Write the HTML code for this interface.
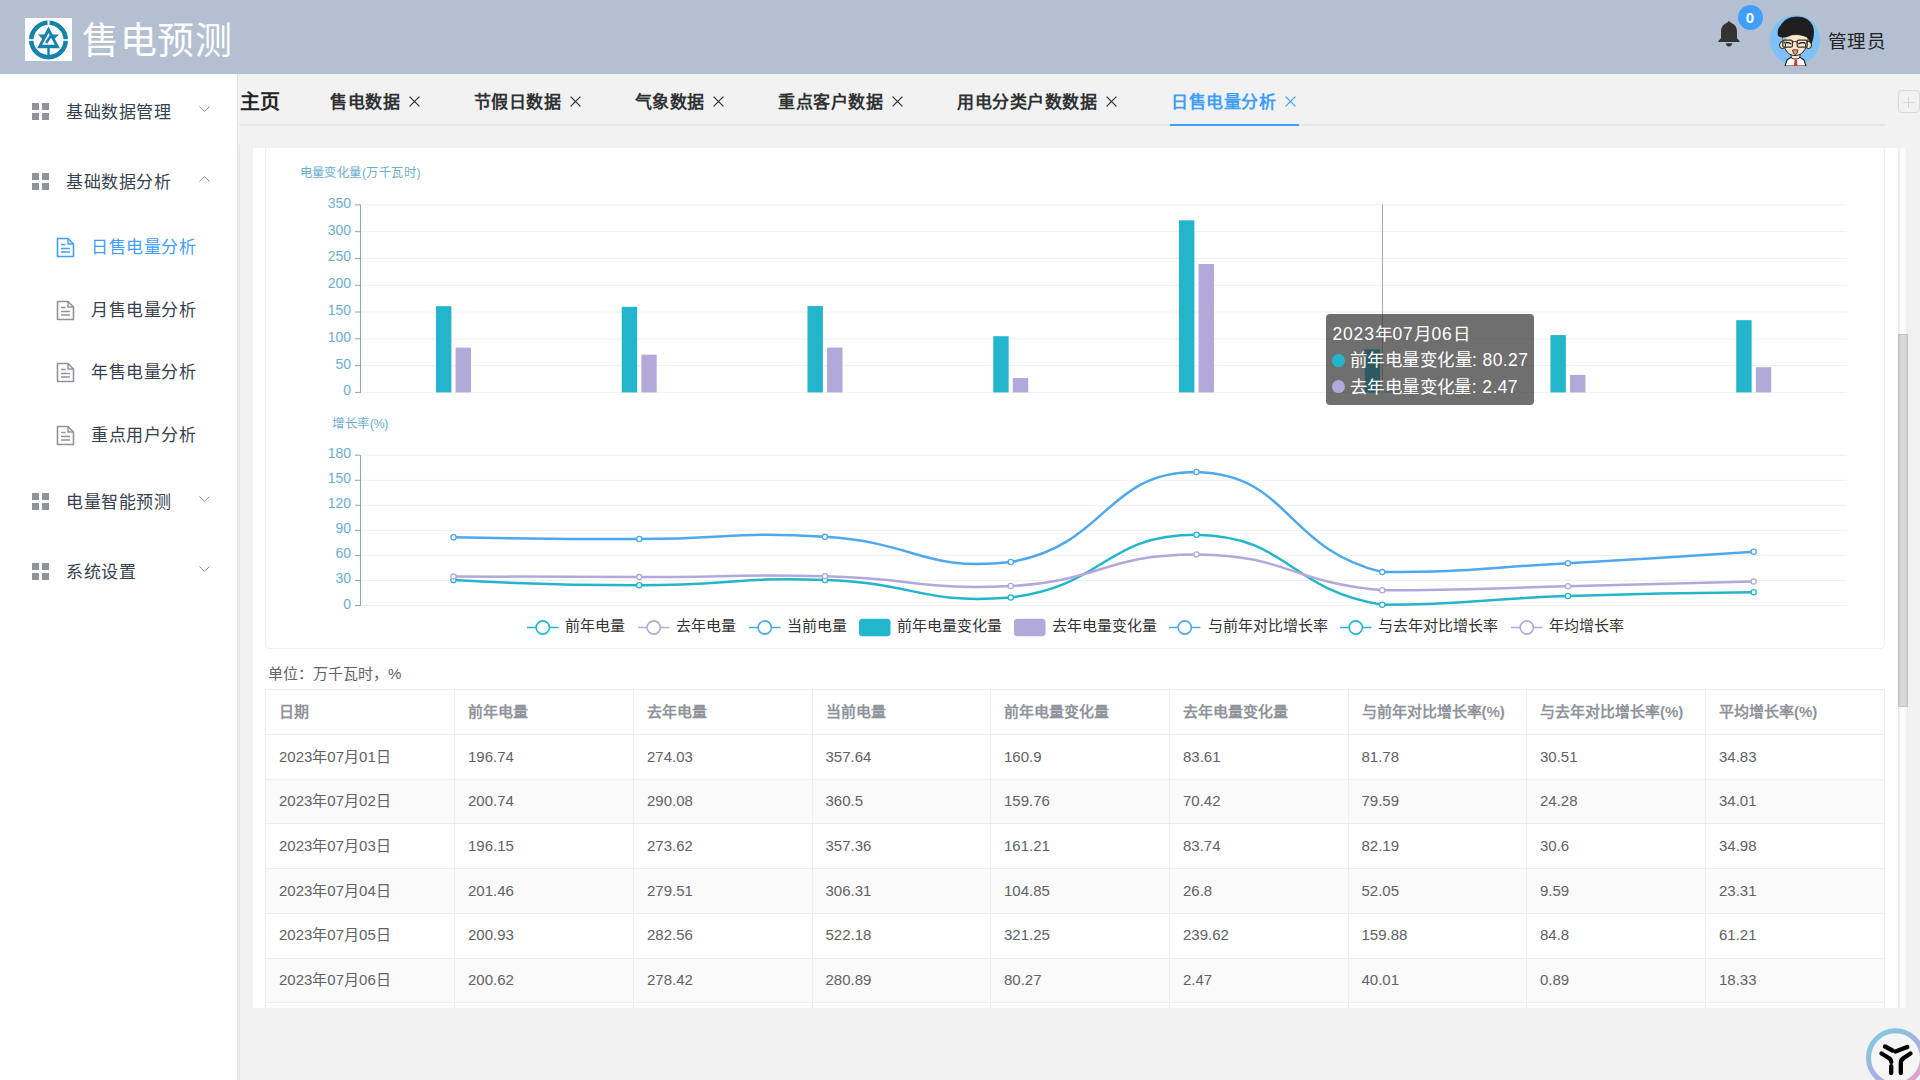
<!DOCTYPE html><html lang="zh-CN"><head><meta charset="utf-8"><title>售电预测</title><style>
*{box-sizing:border-box;margin:0;padding:0}
html,body{width:1920px;height:1080px;overflow:hidden;background:#f2f2f2;font-family:"Liberation Sans",sans-serif;position:relative}
.a{position:absolute;white-space:nowrap}
</style></head><body><div class="a" style="left:0;top:0;width:1920px;height:74px;background:#b3c0d1"></div><div class="a" style="left:25px;top:18px;width:47px;height:43px;background:#fff"></div>
<svg class="a" style="left:25px;top:18px" width="47" height="43" viewBox="0 0 47 43">
<circle cx="23.5" cy="22" r="17.25" fill="none" stroke="#1581ad" stroke-width="4.5"/>
<rect x="22.5" y="0" width="2" height="7" fill="#fff"/>
<rect x="0" y="21.2" width="9" height="1.6" fill="#fff"/>
<rect x="38" y="21.2" width="9" height="1.6" fill="#fff"/>
<path d="M23.5 8.5 L34.8 30.2 L12.2 30.2 Z" fill="#1581ad"/>
<path d="M23.5 15 L29.8 26.8 L17.2 26.8 Z" fill="#fff"/>
<path d="M13 16.5 L20.5 16.5 L18 21.5 Z M34 16.5 L26.5 16.5 L29 21.5 Z" fill="#1581ad"/>
<path d="M26.3 16.8 L21.2 25.2" stroke="#1581ad" stroke-width="2.6"/>
<rect x="22.3" y="29" width="2.4" height="10" fill="#1581ad"/>
</svg><div class="a" style="left:82px;top:15px;font-size:37px;letter-spacing:0.7px;line-height:54px;color:#fff">售电预测</div><svg class="a" style="left:1716px;top:20px" width="26" height="27" viewBox="0 0 26 27">
<path d="M13 1.2c-1 0-1.6.8-1.6 1.6C7.2 3.8 5 7.5 5 11.5v6.8l-2.6 2.8V22h21.2v-.9L21 18.3v-6.8c0-4-2.2-7.7-6.4-8.7 0-.8-.6-1.6-1.6-1.6z" fill="#333"/>
<path d="M9.8 23.2h6.4c0 1.8-1.4 3.2-3.2 3.2s-3.2-1.4-3.2-3.2z" fill="#333"/>
</svg><div class="a" style="left:1737.5px;top:5px;width:25px;height:25px;border-radius:50%;background:#409eff;color:#fff;font-size:15px;font-weight:bold;line-height:25px;text-align:center">0</div><svg class="a" style="left:1770px;top:15px" width="50" height="51" viewBox="0 0 50 51">
<defs><clipPath id="avc"><path d="M25 0A25 25 0 1 1 24.99 0Z M10 38 H40 V51 H10Z"/></clipPath></defs>
<circle cx="25" cy="25" r="25" fill="#7fc0f8"/>
<g clip-path="url(#avc)">
<path d="M15 51 L17 45 Q20 42 24 42 L27 42 Q31 42 34 45 L36 51 Z" fill="#fff" stroke="#1a1a1a" stroke-width="1.1"/>
<path d="M24.5 45 L27 45 L27.5 51 L24 51 Z" fill="#e03030"/>
<rect x="21" y="37" width="9" height="7" rx="3" fill="#fbe6c8" stroke="#1a1a1a" stroke-width="0.9"/>
<path d="M12.5 16 C12 33 17 40.5 25 40.5 C33 40.5 38.5 33 38.5 16 Z" fill="#fbe6c8" stroke="#1a1a1a" stroke-width="1"/>
<ellipse cx="12.5" cy="30" rx="3" ry="3.6" fill="#fbe6c8" stroke="#1a1a1a" stroke-width="1"/>
<ellipse cx="38.5" cy="30" rx="3" ry="3.6" fill="#fbe6c8" stroke="#1a1a1a" stroke-width="1"/>
<path d="M12.6 27 L12.6 21 L16.5 22 L16.5 27 Z" fill="#a8c8c0"/>
<path d="M8.5 21 Q7 14 11 10.5 Q14 4.5 22 2.5 Q31 1 37 4.5 Q43.5 9 43.5 17 Q43.5 24 41 28.5 L38.5 23 Q35 20.5 28 19.5 Q21 19 17.5 21.5 Q13 23 8.5 21 Z" fill="#1f1f1f" stroke="#111" stroke-width="0.8"/>
<rect x="12.8" y="25.2" width="9.6" height="7" rx="1.5" fill="none" stroke="#333" stroke-width="1.3"/>
<rect x="27.2" y="25.2" width="10" height="7" rx="1.5" fill="none" stroke="#333" stroke-width="1.3"/>
<path d="M22.4 27 Q25 26 27.2 27" fill="none" stroke="#333" stroke-width="1"/>
<path d="M15.5 28 Q18 27 21 28.8 M28.5 28.8 Q32 27 35 28" fill="none" stroke="#111" stroke-width="1.4"/>
<path d="M22.5 35 Q25 34.3 28 35 Q27.5 39.5 25.2 39.5 Q23 39.5 22.5 35 Z" fill="#f08a8a" stroke="#1a1a1a" stroke-width="0.7"/>
</g></svg><div class="a" style="left:1827.5px;top:27.5px;font-size:18.5px;letter-spacing:0.8px;line-height:28px;color:#222;font-weight:500">管理员</div><div class="a" style="left:0;top:74px;width:237px;height:1006px;background:#fff"></div><div class="a" style="left:237px;top:74px;width:1px;height:1006px;background:#e4e4e4"></div><div class="a" style="left:239px;top:145px;width:1px;height:935px;background:#e4e4e4"></div><svg class="a" style="left:32px;top:103px" width="17" height="17"><rect x="0" y="0" width="7" height="7" fill="#909399"/><rect x="10" y="0" width="7" height="7" fill="#909399"/><rect x="0" y="10" width="7" height="7" fill="#909399"/><rect x="10" y="10" width="7" height="7" fill="#909399"/></svg><div class="a" style="left:66px;top:99px;letter-spacing:0.6px;font-size:17px;line-height:28px;color:#364150">基础数据管理</div><svg class="a" style="left:199px;top:106px" width="11" height="6"><path d="M0.5 0.5 L5.5 5.5 L10.5 0.5" fill="none" stroke="#909399" stroke-width="1"/></svg><svg class="a" style="left:32px;top:173px" width="17" height="17"><rect x="0" y="0" width="7" height="7" fill="#909399"/><rect x="10" y="0" width="7" height="7" fill="#909399"/><rect x="0" y="10" width="7" height="7" fill="#909399"/><rect x="10" y="10" width="7" height="7" fill="#909399"/></svg><div class="a" style="left:66px;top:169px;letter-spacing:0.6px;font-size:17px;line-height:28px;color:#364150">基础数据分析</div><svg class="a" style="left:199px;top:176px" width="11" height="6"><path d="M0.5 5.5 L5.5 0.5 L10.5 5.5" fill="none" stroke="#909399" stroke-width="1"/></svg><svg class="a" style="left:32px;top:493px" width="17" height="17"><rect x="0" y="0" width="7" height="7" fill="#909399"/><rect x="10" y="0" width="7" height="7" fill="#909399"/><rect x="0" y="10" width="7" height="7" fill="#909399"/><rect x="10" y="10" width="7" height="7" fill="#909399"/></svg><div class="a" style="left:66px;top:489px;letter-spacing:0.6px;font-size:17px;line-height:28px;color:#364150">电量智能预测</div><svg class="a" style="left:199px;top:496px" width="11" height="6"><path d="M0.5 0.5 L5.5 5.5 L10.5 0.5" fill="none" stroke="#909399" stroke-width="1"/></svg><svg class="a" style="left:32px;top:563px" width="17" height="17"><rect x="0" y="0" width="7" height="7" fill="#909399"/><rect x="10" y="0" width="7" height="7" fill="#909399"/><rect x="0" y="10" width="7" height="7" fill="#909399"/><rect x="10" y="10" width="7" height="7" fill="#909399"/></svg><div class="a" style="left:66px;top:559px;letter-spacing:0.6px;font-size:17px;line-height:28px;color:#364150">系统设置</div><svg class="a" style="left:199px;top:566px" width="11" height="6"><path d="M0.5 0.5 L5.5 5.5 L10.5 0.5" fill="none" stroke="#909399" stroke-width="1"/></svg><svg class="a" style="left:56px;top:237px" width="19" height="21" viewBox="0 0 19 21"><path d="M1.5 1.5 H12 L17.5 7 V19.5 H1.5 Z" fill="none" stroke="#409eff" stroke-width="1.6" stroke-linejoin="round"/><path d="M12 1.5 V7 H17.5" fill="none" stroke="#409eff" stroke-width="1.4"/><path d="M5 7.5h4.5M5 11.5h9M5 15h9" stroke="#409eff" stroke-width="1.6"/></svg><div class="a" style="left:91px;top:234px;letter-spacing:0.6px;font-size:17px;line-height:28px;color:#409eff">日售电量分析</div><svg class="a" style="left:56px;top:300px" width="19" height="21" viewBox="0 0 19 21"><path d="M1.5 1.5 H12 L17.5 7 V19.5 H1.5 Z" fill="none" stroke="#909399" stroke-width="1.6" stroke-linejoin="round"/><path d="M12 1.5 V7 H17.5" fill="none" stroke="#909399" stroke-width="1.4"/><path d="M5 7.5h4.5M5 11.5h9M5 15h9" stroke="#909399" stroke-width="1.6"/></svg><div class="a" style="left:91px;top:297px;letter-spacing:0.6px;font-size:17px;line-height:28px;color:#364150">月售电量分析</div><svg class="a" style="left:56px;top:362px" width="19" height="21" viewBox="0 0 19 21"><path d="M1.5 1.5 H12 L17.5 7 V19.5 H1.5 Z" fill="none" stroke="#909399" stroke-width="1.6" stroke-linejoin="round"/><path d="M12 1.5 V7 H17.5" fill="none" stroke="#909399" stroke-width="1.4"/><path d="M5 7.5h4.5M5 11.5h9M5 15h9" stroke="#909399" stroke-width="1.6"/></svg><div class="a" style="left:91px;top:359px;letter-spacing:0.6px;font-size:17px;line-height:28px;color:#364150">年售电量分析</div><svg class="a" style="left:56px;top:425px" width="19" height="21" viewBox="0 0 19 21"><path d="M1.5 1.5 H12 L17.5 7 V19.5 H1.5 Z" fill="none" stroke="#909399" stroke-width="1.6" stroke-linejoin="round"/><path d="M12 1.5 V7 H17.5" fill="none" stroke="#909399" stroke-width="1.4"/><path d="M5 7.5h4.5M5 11.5h9M5 15h9" stroke="#909399" stroke-width="1.6"/></svg><div class="a" style="left:91px;top:422px;letter-spacing:0.6px;font-size:17px;line-height:28px;color:#364150">重点用户分析</div><div class="a" style="left:239px;top:124px;width:1646px;height:2px;background:#e4e7ed"></div><div class="a" style="left:240px;top:87.5px;font-size:20px;line-height:28px;font-weight:bold;color:#222">主页</div><div class="a" style="left:330px;top:88.5px;letter-spacing:0.5px;font-size:17px;line-height:28px;font-weight:bold;color:#303133">售电数据</div><svg class="a" style="left:408.5px;top:96px" width="11" height="11"><path d="M0.6 0.6L10.4 10.4M10.4 0.6L0.6 10.4" stroke="#303133" stroke-width="1.2"/></svg><div class="a" style="left:473.5px;top:88.5px;letter-spacing:0.5px;font-size:17px;line-height:28px;font-weight:bold;color:#303133">节假日数据</div><svg class="a" style="left:569.5px;top:96px" width="11" height="11"><path d="M0.6 0.6L10.4 10.4M10.4 0.6L0.6 10.4" stroke="#303133" stroke-width="1.2"/></svg><div class="a" style="left:634.5px;top:88.5px;letter-spacing:0.5px;font-size:17px;line-height:28px;font-weight:bold;color:#303133">气象数据</div><svg class="a" style="left:713.0px;top:96px" width="11" height="11"><path d="M0.6 0.6L10.4 10.4M10.4 0.6L0.6 10.4" stroke="#303133" stroke-width="1.2"/></svg><div class="a" style="left:778px;top:88.5px;letter-spacing:0.5px;font-size:17px;line-height:28px;font-weight:bold;color:#303133">重点客户数据</div><svg class="a" style="left:891.5px;top:96px" width="11" height="11"><path d="M0.6 0.6L10.4 10.4M10.4 0.6L0.6 10.4" stroke="#303133" stroke-width="1.2"/></svg><div class="a" style="left:957px;top:88.5px;letter-spacing:0.5px;font-size:17px;line-height:28px;font-weight:bold;color:#303133">用电分类户数数据</div><svg class="a" style="left:1105.5px;top:96px" width="11" height="11"><path d="M0.6 0.6L10.4 10.4M10.4 0.6L0.6 10.4" stroke="#303133" stroke-width="1.2"/></svg><div class="a" style="left:1171px;top:88.5px;letter-spacing:0.5px;font-size:17px;line-height:28px;font-weight:bold;color:#409eff">日售电量分析</div><svg class="a" style="left:1284.5px;top:96px" width="11" height="11"><path d="M0.6 0.6L10.4 10.4M10.4 0.6L0.6 10.4" stroke="#409eff" stroke-width="1.2"/></svg><div class="a" style="left:1170px;top:124px;width:129px;height:2px;background:#409eff"></div><div class="a" style="left:1898px;top:90px;width:22px;height:23px;border:1px solid #d3dce6;border-radius:4px"></div><svg class="a" style="left:1903px;top:97px" width="11" height="11"><path d="M5.5 0v11M0 5.5h11" stroke="#ccd5e0" stroke-width="1"/></svg><div class="a" style="left:253px;top:148px;width:1655px;height:860px;background:#fff;overflow:hidden"><div style="position:absolute;left:-253px;top:-148px;width:1920px;height:1080px"><div class="a" style="left:265px;top:60px;width:1620px;height:589px;border:1px solid #ebeef5;border-radius:5px;background:#fff"></div><svg class="a" style="left:0;top:0" width="1920" height="1080" font-family='"Liberation Sans", sans-serif'><text x="299.5" y="177" font-size="12.3" textLength="121" lengthAdjust="spacing" fill="#6baed0">电量变化量(万千瓦时)</text><line x1="361" y1="392.4" x2="1846.6" y2="392.4" stroke="#f0f0f0" stroke-width="1"/><line x1="355" y1="392.4" x2="360" y2="392.4" stroke="#8ca6b8" stroke-width="1"/><text x="351" y="395.4" font-size="14" fill="#6baed0" text-anchor="end">0</text><line x1="361" y1="365.6142857142857" x2="1846.6" y2="365.6142857142857" stroke="#f0f0f0" stroke-width="1"/><line x1="355" y1="365.6142857142857" x2="360" y2="365.6142857142857" stroke="#8ca6b8" stroke-width="1"/><text x="351" y="368.6142857142857" font-size="14" fill="#6baed0" text-anchor="end">50</text><line x1="361" y1="338.8285714285714" x2="1846.6" y2="338.8285714285714" stroke="#f0f0f0" stroke-width="1"/><line x1="355" y1="338.8285714285714" x2="360" y2="338.8285714285714" stroke="#8ca6b8" stroke-width="1"/><text x="351" y="341.8285714285714" font-size="14" fill="#6baed0" text-anchor="end">100</text><line x1="361" y1="312.04285714285714" x2="1846.6" y2="312.04285714285714" stroke="#f0f0f0" stroke-width="1"/><line x1="355" y1="312.04285714285714" x2="360" y2="312.04285714285714" stroke="#8ca6b8" stroke-width="1"/><text x="351" y="315.04285714285714" font-size="14" fill="#6baed0" text-anchor="end">150</text><line x1="361" y1="285.25714285714287" x2="1846.6" y2="285.25714285714287" stroke="#f0f0f0" stroke-width="1"/><line x1="355" y1="285.25714285714287" x2="360" y2="285.25714285714287" stroke="#8ca6b8" stroke-width="1"/><text x="351" y="288.25714285714287" font-size="14" fill="#6baed0" text-anchor="end">200</text><line x1="361" y1="258.4714285714286" x2="1846.6" y2="258.4714285714286" stroke="#f0f0f0" stroke-width="1"/><line x1="355" y1="258.4714285714286" x2="360" y2="258.4714285714286" stroke="#8ca6b8" stroke-width="1"/><text x="351" y="261.4714285714286" font-size="14" fill="#6baed0" text-anchor="end">250</text><line x1="361" y1="231.6857142857143" x2="1846.6" y2="231.6857142857143" stroke="#f0f0f0" stroke-width="1"/><line x1="355" y1="231.6857142857143" x2="360" y2="231.6857142857143" stroke="#8ca6b8" stroke-width="1"/><text x="351" y="234.6857142857143" font-size="14" fill="#6baed0" text-anchor="end">300</text><line x1="361" y1="204.90000000000003" x2="1846.6" y2="204.90000000000003" stroke="#f0f0f0" stroke-width="1"/><line x1="355" y1="204.90000000000003" x2="360" y2="204.90000000000003" stroke="#8ca6b8" stroke-width="1"/><text x="351" y="207.90000000000003" font-size="14" fill="#6baed0" text-anchor="end">350</text><line x1="360.5" y1="204.4" x2="360.5" y2="392.9" stroke="#8ca6b8" stroke-width="1"/><rect x="435.98" y="306.20" width="15.4" height="86.20" fill="#23b5cc"/><rect x="455.58" y="347.61" width="15.4" height="44.79" fill="#b3a8da"/><rect x="621.73" y="306.81" width="15.4" height="85.59" fill="#23b5cc"/><rect x="641.33" y="354.67" width="15.4" height="37.72" fill="#b3a8da"/><rect x="807.48" y="306.04" width="15.4" height="86.36" fill="#23b5cc"/><rect x="827.08" y="347.54" width="15.4" height="44.86" fill="#b3a8da"/><rect x="993.23" y="336.23" width="15.4" height="56.17" fill="#23b5cc"/><rect x="1012.83" y="378.04" width="15.4" height="14.36" fill="#b3a8da"/><rect x="1178.97" y="220.30" width="15.4" height="172.10" fill="#23b5cc"/><rect x="1198.57" y="264.03" width="15.4" height="128.37" fill="#b3a8da"/><rect x="1364.72" y="349.40" width="15.4" height="43.00" fill="#23b5cc"/><rect x="1384.32" y="391.08" width="15.4" height="1.32" fill="#b3a8da"/><rect x="1550.47" y="335.08" width="15.4" height="57.32" fill="#23b5cc"/><rect x="1570.07" y="374.88" width="15.4" height="17.52" fill="#b3a8da"/><rect x="1736.22" y="320.19" width="15.4" height="72.21" fill="#23b5cc"/><rect x="1755.82" y="367.22" width="15.4" height="25.18" fill="#b3a8da"/><line x1="1382.5" y1="204.5" x2="1382.5" y2="392.5" stroke="#aaa" stroke-width="1"/><text x="332" y="428" font-size="12.5" textLength="56.5" lengthAdjust="spacing" fill="#6baed0">增长率(%)</text><line x1="361" y1="605.5" x2="1846.6" y2="605.5" stroke="#f0f0f0" stroke-width="1"/><line x1="355" y1="605.5" x2="360" y2="605.5" stroke="#8ca6b8" stroke-width="1"/><text x="351" y="608.5" font-size="14" fill="#6baed0" text-anchor="end">0</text><line x1="361" y1="580.45" x2="1846.6" y2="580.45" stroke="#f0f0f0" stroke-width="1"/><line x1="355" y1="580.45" x2="360" y2="580.45" stroke="#8ca6b8" stroke-width="1"/><text x="351" y="583.45" font-size="14" fill="#6baed0" text-anchor="end">30</text><line x1="361" y1="555.4" x2="1846.6" y2="555.4" stroke="#f0f0f0" stroke-width="1"/><line x1="355" y1="555.4" x2="360" y2="555.4" stroke="#8ca6b8" stroke-width="1"/><text x="351" y="558.4" font-size="14" fill="#6baed0" text-anchor="end">60</text><line x1="361" y1="530.35" x2="1846.6" y2="530.35" stroke="#f0f0f0" stroke-width="1"/><line x1="355" y1="530.35" x2="360" y2="530.35" stroke="#8ca6b8" stroke-width="1"/><text x="351" y="533.35" font-size="14" fill="#6baed0" text-anchor="end">90</text><line x1="361" y1="505.3" x2="1846.6" y2="505.3" stroke="#f0f0f0" stroke-width="1"/><line x1="355" y1="505.3" x2="360" y2="505.3" stroke="#8ca6b8" stroke-width="1"/><text x="351" y="508.3" font-size="14" fill="#6baed0" text-anchor="end">120</text><line x1="361" y1="480.25" x2="1846.6" y2="480.25" stroke="#f0f0f0" stroke-width="1"/><line x1="355" y1="480.25" x2="360" y2="480.25" stroke="#8ca6b8" stroke-width="1"/><text x="351" y="483.25" font-size="14" fill="#6baed0" text-anchor="end">150</text><line x1="361" y1="455.2" x2="1846.6" y2="455.2" stroke="#f0f0f0" stroke-width="1"/><line x1="355" y1="455.2" x2="360" y2="455.2" stroke="#8ca6b8" stroke-width="1"/><text x="351" y="458.2" font-size="14" fill="#6baed0" text-anchor="end">180</text><line x1="360.5" y1="455.2" x2="360.5" y2="606" stroke="#8ca6b8" stroke-width="1"/><path d="M453.48 537.21 C453.48 537.21 546.35 539.13 639.23 539.04 C732.10 538.96 732.52 531.15 824.98 536.87 C918.27 542.65 922.32 572.09 1010.73 562.04 C1108.07 545.04 1104.62 472.00 1196.47 472.00 C1290.37 474.54 1283.49 547.84 1382.22 572.09 C1469.24 572.09 1475.14 568.32 1567.97 563.25 C1660.89 558.18 1753.72 551.81 1753.72 551.81" fill="none" stroke="#4ea8ee" stroke-width="2.5"/><circle cx="453.48" cy="537.21" r="2.6" fill="#fff" stroke="#4ea8ee" stroke-width="1.3"/><circle cx="639.23" cy="539.04" r="2.6" fill="#fff" stroke="#4ea8ee" stroke-width="1.3"/><circle cx="824.98" cy="536.87" r="2.6" fill="#fff" stroke="#4ea8ee" stroke-width="1.3"/><circle cx="1010.73" cy="562.04" r="2.6" fill="#fff" stroke="#4ea8ee" stroke-width="1.3"/><circle cx="1196.47" cy="472.00" r="2.6" fill="#fff" stroke="#4ea8ee" stroke-width="1.3"/><circle cx="1382.22" cy="572.09" r="2.6" fill="#fff" stroke="#4ea8ee" stroke-width="1.3"/><circle cx="1567.97" cy="563.25" r="2.6" fill="#fff" stroke="#4ea8ee" stroke-width="1.3"/><circle cx="1753.72" cy="551.81" r="2.6" fill="#fff" stroke="#4ea8ee" stroke-width="1.3"/><path d="M453.48 580.02 C453.48 580.02 546.35 585.24 639.23 585.23 C732.10 585.21 732.29 576.89 824.98 579.95 C918.04 583.02 920.16 604.76 1010.73 597.49 C1105.91 585.90 1104.18 534.69 1196.47 534.69 C1289.93 536.52 1286.31 588.91 1382.22 604.76 C1472.06 604.76 1475.06 599.18 1567.97 596.06 C1660.81 592.95 1753.72 592.31 1753.72 592.31" fill="none" stroke="#23b5cc" stroke-width="2.5"/><circle cx="453.48" cy="580.02" r="2.6" fill="#fff" stroke="#23b5cc" stroke-width="1.3"/><circle cx="639.23" cy="585.23" r="2.6" fill="#fff" stroke="#23b5cc" stroke-width="1.3"/><circle cx="824.98" cy="579.95" r="2.6" fill="#fff" stroke="#23b5cc" stroke-width="1.3"/><circle cx="1010.73" cy="597.49" r="2.6" fill="#fff" stroke="#23b5cc" stroke-width="1.3"/><circle cx="1196.47" cy="534.69" r="2.6" fill="#fff" stroke="#23b5cc" stroke-width="1.3"/><circle cx="1382.22" cy="604.76" r="2.6" fill="#fff" stroke="#23b5cc" stroke-width="1.3"/><circle cx="1567.97" cy="596.06" r="2.6" fill="#fff" stroke="#23b5cc" stroke-width="1.3"/><circle cx="1753.72" cy="592.31" r="2.6" fill="#fff" stroke="#23b5cc" stroke-width="1.3"/><path d="M453.48 576.42 C453.48 576.42 546.35 577.13 639.23 577.10 C732.10 577.07 732.16 574.06 824.98 576.29 C917.91 578.53 918.45 590.19 1010.73 586.04 C1104.20 580.53 1103.78 554.39 1196.47 554.39 C1289.53 555.43 1288.51 582.15 1382.22 590.19 C1474.26 590.19 1475.10 588.44 1567.97 586.29 C1660.85 584.15 1753.72 581.62 1753.72 581.62" fill="none" stroke="#b3a8da" stroke-width="2.5"/><circle cx="453.48" cy="576.42" r="2.6" fill="#fff" stroke="#b3a8da" stroke-width="1.3"/><circle cx="639.23" cy="577.10" r="2.6" fill="#fff" stroke="#b3a8da" stroke-width="1.3"/><circle cx="824.98" cy="576.29" r="2.6" fill="#fff" stroke="#b3a8da" stroke-width="1.3"/><circle cx="1010.73" cy="586.04" r="2.6" fill="#fff" stroke="#b3a8da" stroke-width="1.3"/><circle cx="1196.47" cy="554.39" r="2.6" fill="#fff" stroke="#b3a8da" stroke-width="1.3"/><circle cx="1382.22" cy="590.19" r="2.6" fill="#fff" stroke="#b3a8da" stroke-width="1.3"/><circle cx="1567.97" cy="586.29" r="2.6" fill="#fff" stroke="#b3a8da" stroke-width="1.3"/><circle cx="1753.72" cy="581.62" r="2.6" fill="#fff" stroke="#b3a8da" stroke-width="1.3"/><line x1="527" y1="627.5" x2="558.5" y2="627.5" stroke="#23b5cc" stroke-width="1.5"/><circle cx="542.75" cy="627.5" r="6.6" fill="#fff" stroke="#23b5cc" stroke-width="1.6"/><text x="565" y="631.0" font-size="15" fill="#333">前年电量</text><line x1="638" y1="627.5" x2="669.5" y2="627.5" stroke="#b3a8da" stroke-width="1.5"/><circle cx="653.75" cy="627.5" r="6.6" fill="#fff" stroke="#b3a8da" stroke-width="1.6"/><text x="676" y="631.0" font-size="15" fill="#333">去年电量</text><line x1="749" y1="627.5" x2="780.5" y2="627.5" stroke="#4ea8ee" stroke-width="1.5"/><circle cx="764.75" cy="627.5" r="6.6" fill="#fff" stroke="#4ea8ee" stroke-width="1.6"/><text x="787" y="631.0" font-size="15" fill="#333">当前电量</text><rect x="859" y="618.75" width="31.5" height="17.5" rx="3.5" fill="#23b5cc"/><text x="897" y="631.0" font-size="15" fill="#333">前年电量变化量</text><rect x="1014" y="618.75" width="31.5" height="17.5" rx="3.5" fill="#b3a8da"/><text x="1052" y="631.0" font-size="15" fill="#333">去年电量变化量</text><line x1="1169" y1="627.5" x2="1200.5" y2="627.5" stroke="#4ea8ee" stroke-width="1.5"/><circle cx="1184.75" cy="627.5" r="6.6" fill="#fff" stroke="#4ea8ee" stroke-width="1.6"/><text x="1208" y="631.0" font-size="15" fill="#333">与前年对比增长率</text><line x1="1340" y1="627.5" x2="1371.5" y2="627.5" stroke="#23b5cc" stroke-width="1.5"/><circle cx="1355.75" cy="627.5" r="6.6" fill="#fff" stroke="#23b5cc" stroke-width="1.6"/><text x="1378" y="631.0" font-size="15" fill="#333">与去年对比增长率</text><line x1="1511" y1="627.5" x2="1542.5" y2="627.5" stroke="#b3a8da" stroke-width="1.5"/><circle cx="1526.75" cy="627.5" r="6.6" fill="#fff" stroke="#b3a8da" stroke-width="1.6"/><text x="1549" y="631.0" font-size="15" fill="#333">年均增长率</text></svg><svg class="a" style="left:1326px;top:314px" width="208" height="91" font-family='"Liberation Sans", sans-serif'><rect x="0" y="0" width="208" height="91" rx="4" fill="rgba(50,50,50,0.7)"/><text x="6.5" y="340" transform="translate(0,-314)" font-size="17.5" fill="#fff" textLength="137" lengthAdjust="spacing">2023年07月06日</text><circle cx="12.5" cy="46.6" r="6.5" fill="#23b5cc"/><text x="24" y="366" transform="translate(0,-314)" font-size="17.5" fill="#fff" textLength="178" lengthAdjust="spacing">前年电量变化量: 80.27</text><circle cx="12.5" cy="72.6" r="6.5" fill="#b3a8da"/><text x="24" y="393" transform="translate(0,-314)" font-size="17.5" fill="#fff" textLength="167.5" lengthAdjust="spacing">去年电量变化量: 2.47</text></svg><div class="a" style="left:268px;top:662.5px;font-size:15px;line-height:22px;color:#606266">单位：万千瓦时，%</div><div class="a" style="left:266px;top:778.7px;width:1618px;height:44.7px;background:#fafafa"></div><div class="a" style="left:266px;top:868.1px;width:1618px;height:44.7px;background:#fafafa"></div><div class="a" style="left:266px;top:957.5px;width:1618px;height:44.7px;background:#fafafa"></div><div class="a" style="left:265px;top:689px;width:1620px;height:1px;background:#ebeef5"></div><div class="a" style="left:265px;top:734.0px;width:1620px;height:1px;background:#ebeef5"></div><div class="a" style="left:265px;top:778.7px;width:1620px;height:1px;background:#ebeef5"></div><div class="a" style="left:265px;top:823.4px;width:1620px;height:1px;background:#ebeef5"></div><div class="a" style="left:265px;top:868.1px;width:1620px;height:1px;background:#ebeef5"></div><div class="a" style="left:265px;top:912.8px;width:1620px;height:1px;background:#ebeef5"></div><div class="a" style="left:265px;top:957.5px;width:1620px;height:1px;background:#ebeef5"></div><div class="a" style="left:265px;top:1002.2px;width:1620px;height:1px;background:#ebeef5"></div><div class="a" style="left:265px;top:1046.9px;width:1620px;height:1px;background:#ebeef5"></div><div class="a" style="left:265px;top:689px;width:1px;height:400px;background:#ebeef5"></div><div class="a" style="left:454px;top:689px;width:1px;height:400px;background:#ebeef5"></div><div class="a" style="left:633px;top:689px;width:1px;height:400px;background:#ebeef5"></div><div class="a" style="left:811.5px;top:689px;width:1px;height:400px;background:#ebeef5"></div><div class="a" style="left:990px;top:689px;width:1px;height:400px;background:#ebeef5"></div><div class="a" style="left:1169px;top:689px;width:1px;height:400px;background:#ebeef5"></div><div class="a" style="left:1347.5px;top:689px;width:1px;height:400px;background:#ebeef5"></div><div class="a" style="left:1526px;top:689px;width:1px;height:400px;background:#ebeef5"></div><div class="a" style="left:1705px;top:689px;width:1px;height:400px;background:#ebeef5"></div><div class="a" style="left:1884px;top:689px;width:1px;height:400px;background:#ebeef5"></div><div class="a" style="left:279px;top:700.5px;font-size:15px;line-height:22px;font-weight:bold;color:#909399">日期</div><div class="a" style="left:468px;top:700.5px;font-size:15px;line-height:22px;font-weight:bold;color:#909399">前年电量</div><div class="a" style="left:647px;top:700.5px;font-size:15px;line-height:22px;font-weight:bold;color:#909399">去年电量</div><div class="a" style="left:825.5px;top:700.5px;font-size:15px;line-height:22px;font-weight:bold;color:#909399">当前电量</div><div class="a" style="left:1004px;top:700.5px;font-size:15px;line-height:22px;font-weight:bold;color:#909399">前年电量变化量</div><div class="a" style="left:1183px;top:700.5px;font-size:15px;line-height:22px;font-weight:bold;color:#909399">去年电量变化量</div><div class="a" style="left:1361.5px;top:700.5px;font-size:15px;line-height:22px;font-weight:bold;color:#909399">与前年对比增长率(%)</div><div class="a" style="left:1540px;top:700.5px;font-size:15px;line-height:22px;font-weight:bold;color:#909399">与去年对比增长率(%)</div><div class="a" style="left:1719px;top:700.5px;font-size:15px;line-height:22px;font-weight:bold;color:#909399">平均增长率(%)</div><div class="a" style="left:279px;top:745.5px;font-size:15px;line-height:22px;color:#606266">2023年07月01日</div><div class="a" style="left:468px;top:745.5px;font-size:15px;line-height:22px;color:#606266">196.74</div><div class="a" style="left:647px;top:745.5px;font-size:15px;line-height:22px;color:#606266">274.03</div><div class="a" style="left:825.5px;top:745.5px;font-size:15px;line-height:22px;color:#606266">357.64</div><div class="a" style="left:1004px;top:745.5px;font-size:15px;line-height:22px;color:#606266">160.9</div><div class="a" style="left:1183px;top:745.5px;font-size:15px;line-height:22px;color:#606266">83.61</div><div class="a" style="left:1361.5px;top:745.5px;font-size:15px;line-height:22px;color:#606266">81.78</div><div class="a" style="left:1540px;top:745.5px;font-size:15px;line-height:22px;color:#606266">30.51</div><div class="a" style="left:1719px;top:745.5px;font-size:15px;line-height:22px;color:#606266">34.83</div><div class="a" style="left:279px;top:790.2px;font-size:15px;line-height:22px;color:#606266">2023年07月02日</div><div class="a" style="left:468px;top:790.2px;font-size:15px;line-height:22px;color:#606266">200.74</div><div class="a" style="left:647px;top:790.2px;font-size:15px;line-height:22px;color:#606266">290.08</div><div class="a" style="left:825.5px;top:790.2px;font-size:15px;line-height:22px;color:#606266">360.5</div><div class="a" style="left:1004px;top:790.2px;font-size:15px;line-height:22px;color:#606266">159.76</div><div class="a" style="left:1183px;top:790.2px;font-size:15px;line-height:22px;color:#606266">70.42</div><div class="a" style="left:1361.5px;top:790.2px;font-size:15px;line-height:22px;color:#606266">79.59</div><div class="a" style="left:1540px;top:790.2px;font-size:15px;line-height:22px;color:#606266">24.28</div><div class="a" style="left:1719px;top:790.2px;font-size:15px;line-height:22px;color:#606266">34.01</div><div class="a" style="left:279px;top:834.9px;font-size:15px;line-height:22px;color:#606266">2023年07月03日</div><div class="a" style="left:468px;top:834.9px;font-size:15px;line-height:22px;color:#606266">196.15</div><div class="a" style="left:647px;top:834.9px;font-size:15px;line-height:22px;color:#606266">273.62</div><div class="a" style="left:825.5px;top:834.9px;font-size:15px;line-height:22px;color:#606266">357.36</div><div class="a" style="left:1004px;top:834.9px;font-size:15px;line-height:22px;color:#606266">161.21</div><div class="a" style="left:1183px;top:834.9px;font-size:15px;line-height:22px;color:#606266">83.74</div><div class="a" style="left:1361.5px;top:834.9px;font-size:15px;line-height:22px;color:#606266">82.19</div><div class="a" style="left:1540px;top:834.9px;font-size:15px;line-height:22px;color:#606266">30.6</div><div class="a" style="left:1719px;top:834.9px;font-size:15px;line-height:22px;color:#606266">34.98</div><div class="a" style="left:279px;top:879.6px;font-size:15px;line-height:22px;color:#606266">2023年07月04日</div><div class="a" style="left:468px;top:879.6px;font-size:15px;line-height:22px;color:#606266">201.46</div><div class="a" style="left:647px;top:879.6px;font-size:15px;line-height:22px;color:#606266">279.51</div><div class="a" style="left:825.5px;top:879.6px;font-size:15px;line-height:22px;color:#606266">306.31</div><div class="a" style="left:1004px;top:879.6px;font-size:15px;line-height:22px;color:#606266">104.85</div><div class="a" style="left:1183px;top:879.6px;font-size:15px;line-height:22px;color:#606266">26.8</div><div class="a" style="left:1361.5px;top:879.6px;font-size:15px;line-height:22px;color:#606266">52.05</div><div class="a" style="left:1540px;top:879.6px;font-size:15px;line-height:22px;color:#606266">9.59</div><div class="a" style="left:1719px;top:879.6px;font-size:15px;line-height:22px;color:#606266">23.31</div><div class="a" style="left:279px;top:924.3px;font-size:15px;line-height:22px;color:#606266">2023年07月05日</div><div class="a" style="left:468px;top:924.3px;font-size:15px;line-height:22px;color:#606266">200.93</div><div class="a" style="left:647px;top:924.3px;font-size:15px;line-height:22px;color:#606266">282.56</div><div class="a" style="left:825.5px;top:924.3px;font-size:15px;line-height:22px;color:#606266">522.18</div><div class="a" style="left:1004px;top:924.3px;font-size:15px;line-height:22px;color:#606266">321.25</div><div class="a" style="left:1183px;top:924.3px;font-size:15px;line-height:22px;color:#606266">239.62</div><div class="a" style="left:1361.5px;top:924.3px;font-size:15px;line-height:22px;color:#606266">159.88</div><div class="a" style="left:1540px;top:924.3px;font-size:15px;line-height:22px;color:#606266">84.8</div><div class="a" style="left:1719px;top:924.3px;font-size:15px;line-height:22px;color:#606266">61.21</div><div class="a" style="left:279px;top:969.0px;font-size:15px;line-height:22px;color:#606266">2023年07月06日</div><div class="a" style="left:468px;top:969.0px;font-size:15px;line-height:22px;color:#606266">200.62</div><div class="a" style="left:647px;top:969.0px;font-size:15px;line-height:22px;color:#606266">278.42</div><div class="a" style="left:825.5px;top:969.0px;font-size:15px;line-height:22px;color:#606266">280.89</div><div class="a" style="left:1004px;top:969.0px;font-size:15px;line-height:22px;color:#606266">80.27</div><div class="a" style="left:1183px;top:969.0px;font-size:15px;line-height:22px;color:#606266">2.47</div><div class="a" style="left:1361.5px;top:969.0px;font-size:15px;line-height:22px;color:#606266">40.01</div><div class="a" style="left:1540px;top:969.0px;font-size:15px;line-height:22px;color:#606266">0.89</div><div class="a" style="left:1719px;top:969.0px;font-size:15px;line-height:22px;color:#606266">18.33</div><div class="a" style="left:279px;top:1013.7px;font-size:15px;line-height:22px;color:#606266">2023年07月07日</div><div class="a" style="left:468px;top:1013.7px;font-size:15px;line-height:22px;color:#606266">201.1</div><div class="a" style="left:647px;top:1013.7px;font-size:15px;line-height:22px;color:#606266">280.2</div><div class="a" style="left:825.5px;top:1013.7px;font-size:15px;line-height:22px;color:#606266">308.1</div><div class="a" style="left:1004px;top:1013.7px;font-size:15px;line-height:22px;color:#606266">107</div><div class="a" style="left:1183px;top:1013.7px;font-size:15px;line-height:22px;color:#606266">32.7</div><div class="a" style="left:1361.5px;top:1013.7px;font-size:15px;line-height:22px;color:#606266">53.2</div><div class="a" style="left:1540px;top:1013.7px;font-size:15px;line-height:22px;color:#606266">10.0</div><div class="a" style="left:1719px;top:1013.7px;font-size:15px;line-height:22px;color:#606266">23.9</div></div></div><div class="a" style="left:1898px;top:148px;width:10px;height:860px;background:linear-gradient(to right,#e8e8e8 0,#f6f6f6 20%,#fefefe 50%,#f6f6f6 80%,#e8e8e8 100%)"></div><div class="a" style="left:1898px;top:334px;width:10px;height:373px;background:linear-gradient(to right,#bcbcbc 0,#d2d2d2 20%,#dcdcdc 50%,#d2d2d2 80%,#bcbcbc 100%);border-top:1px solid #c4c4c4;border-bottom:1px solid #c8c8c8"></div><svg class="a" style="left:1864px;top:1026px" width="56" height="54" viewBox="0 0 56 54">
<defs><linearGradient id="rg" x1="0.2" y1="0" x2="0.9" y2="1"><stop offset="0" stop-color="#7ccbdc"/><stop offset="0.55" stop-color="#aaaee4"/><stop offset="1" stop-color="#f3a0c0"/></linearGradient></defs>
<circle cx="31.5" cy="31.8" r="27" fill="#f5f5f5" stroke="url(#rg)" stroke-width="5"/>
<g stroke="#000" stroke-width="4.3" stroke-linecap="round" fill="none">
<path d="M21 20.5 L28.5 24.5"/><path d="M31.5 25.5 L43.3 21"/>
<path d="M17.5 27.5 L25.5 32.5 Q27.3 34 27.3 36"/><path d="M27.2 40.2 L27.2 47"/>
<path d="M46.5 27.5 L40.5 31.5 Q36.8 33.5 36.8 36.5 L36.8 47"/>
</g></svg></body></html>
